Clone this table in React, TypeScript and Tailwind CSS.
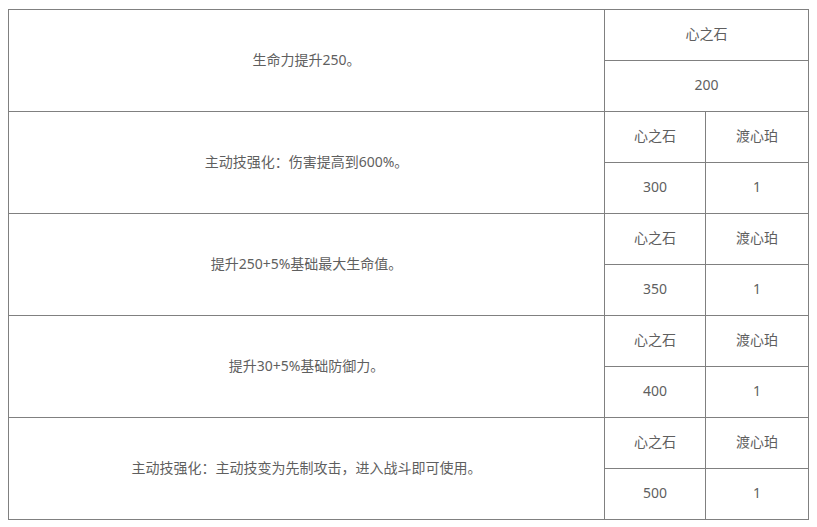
import React from 'react';

interface Reward {
  effect: string;
  stone: string;
  amber?: string;
}

const rewards: Reward[] = [
  { effect: '生命力提升250。', stone: '200' },
  { effect: '主动技强化：伤害提高到600%。', stone: '300', amber: '1' },
  { effect: '提升250+5%基础最大生命值。', stone: '350', amber: '1' },
  { effect: '提升30+5%基础防御力。', stone: '400', amber: '1' },
  { effect: '主动技强化：主动技变为先制攻击，进入战斗即可使用。', stone: '500', amber: '1' },
];

const cell = 'border border-[#808080] text-center align-middle pb-[3px]';

const App: React.FC = () => {
  return (
    <div className="bg-white w-[817px] h-[527px] pt-[9px] pl-[8px] text-[14px] text-[#5f5f5f] font-['Noto_Sans','Noto_Sans_CJK_SC',sans-serif]">
      <table className="w-[800px] table-fixed border-collapse border border-[#808080]">
        <colgroup>
          <col className="w-[596px]" />
          <col className="w-[101px]" />
          <col className="w-[103px]" />
        </colgroup>
        <tbody>
          {rewards.map((r, i) =>
            r.amber ? (
              <React.Fragment key={i}>
                <tr className="h-[51px]">
                  <td rowSpan={2} className={cell}>{r.effect}</td>
                  <td className={cell}>心之石</td>
                  <td className={cell}>渡心珀</td>
                </tr>
                <tr className="h-[51px]">
                  <td className={cell}>{r.stone}</td>
                  <td className={cell}>{r.amber}</td>
                </tr>
              </React.Fragment>
            ) : (
              <React.Fragment key={i}>
                <tr className="h-[51px]">
                  <td rowSpan={2} className={cell}>{r.effect}</td>
                  <td colSpan={2} className={cell}>心之石</td>
                </tr>
                <tr className="h-[51px]">
                  <td colSpan={2} className={cell}>{r.stone}</td>
                </tr>
              </React.Fragment>
            )
          )}
        </tbody>
      </table>
    </div>
  );
};

export default App;
